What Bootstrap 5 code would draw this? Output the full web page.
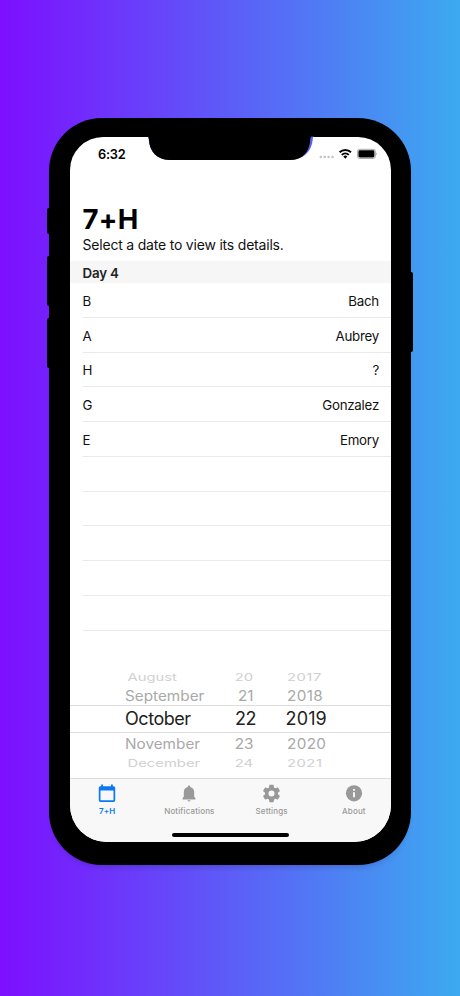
<!DOCTYPE html>
<html lang="en" data-bs-theme="light">
<head>
<meta charset="utf-8">
<meta name="viewport" content="width=device-width, initial-scale=1">
<title>7+H</title>
<link href="https://cdn.jsdelivr.net/npm/bootstrap@5.3.0/dist/css/bootstrap.min.css" rel="stylesheet">
<style>
body{width:460px;height:996px;background:linear-gradient(90deg,#7d0fff 0%,#3caaf0 100%);font-family:Inter,"Liberation Sans",sans-serif;color:#111;line-height:1}
.stage{padding:118px 0 0 49px}
.phone{width:361.5px;height:747px;padding:18.5px 19.5px 23px 20.5px;background:#000;border-radius:53px;box-shadow:0 5px 7px -5px rgba(20,20,70,.35)}
.side-key{background:#000;width:4px;border-radius:2px}
.key-mute{left:-2px;top:90px;height:26px}
.key-up{left:-2px;top:138px;height:50px}
.key-down{left:-2px;top:200px;height:50px}
.key-power{right:-2px;top:154px;height:80px}
.screen{background:#fff;border-radius:33px 33px 37px 37px}
.notch{left:98px;top:17px}
.status{height:68.5px;padding:10px 14px 0 28.5px}
.clock{font-size:12.8px;font-weight:600;color:#000;letter-spacing:-.2px;line-height:15px}
.headline{padding-left:13px;height:56px;padding-top:1px}
.headline h1{font-size:27.5px;font-weight:700;line-height:27px;color:#000;letter-spacing:.3px}
.headline p{font-size:14px;line-height:16px;letter-spacing:-.2px}
.day-head{height:22px;background:#f6f6f6;padding:2.5px 0 0 13px;font-size:13.3px;font-weight:600;color:#222;letter-spacing:-.15px}
.lines{padding-left:13px}
.line-row{height:34.76px;border-bottom:1px solid #e9e9e9;padding-right:12px;padding-top:3.5px;font-size:13.3px;letter-spacing:-.24px}
.picker{height:105px;margin-top:31.5px;padding-top:5px}
.wheel{grid-template-columns:101px 56px 86px;padding-left:55.5px;text-align:left}
.wheel>:nth-child(2){text-align:right;padding-right:26px}
.wheel>*{white-space:nowrap}
.wheel-far{height:18px;font-size:14.8px;color:#d0d0d0;padding-top:2px}
.wheel-far>:nth-child(1){padding-left:2.5px}
.wheel-far>:nth-child(2){padding-right:29px}
.wheel-far>:nth-child(3){padding-left:5px;letter-spacing:.5px}
.wheel-near{height:20px;font-size:15.3px;color:#a9a9a9;padding-top:1px}
.wheel-near>:nth-child(2){padding-right:28.5px}
.wheel-near>:nth-child(3){padding-left:5px;letter-spacing:.35px}
.wheel-now{height:28px;font-size:18px;color:#222;border-top:1px solid #ddd;border-bottom:1px solid #ddd;letter-spacing:-.45px}
.wheel-now>:nth-child(3){padding-left:3.5px;letter-spacing:.15px}
.squash{display:inline-block;transform:scaleY(.72)}
.press{display:inline-block;transform:scaleY(.92)}
.wheel-grid{display:grid;align-items:center}
.tabs{height:64px;background:#f8f8f8;border-top:1px solid #dcdcdc;padding-top:5px}
.tab-row{margin:0 -4px 0 -3.5px}
.tab{color:#999;font-size:8px;font-weight:500;letter-spacing:.13px;text-decoration:none;gap:4px}
.tab-on{color:#0a78f5}
.tab-on span{font-weight:600}
.home-bar{width:117px;height:4px;border-radius:2px;background:#000;margin:18px 0 0 102.5px}
</style>
<script src="https://cdn.jsdelivr.net/npm/bootstrap@5.3.0/dist/js/bootstrap.bundle.min.js"></script>
</head>
<body class="m-0 overflow-hidden">
<div class="stage">
<div class="phone position-relative">
  <span class="side-key key-mute position-absolute"></span>
  <span class="side-key key-up position-absolute"></span>
  <span class="side-key key-down position-absolute"></span>
  <span class="side-key key-power position-absolute"></span>
  <main class="screen h-100 d-flex flex-column overflow-hidden">
    <div class="status d-flex justify-content-between align-items-start flex-shrink-0">
      <span class="clock">6:32</span>
      <svg width="58" height="14" viewBox="0 0 58 14" aria-hidden="true">
        <g fill="#c4c4c4"><circle cx="1.8" cy="10" r="1.3"/><circle cx="5.7" cy="10" r="1.3"/><circle cx="9.6" cy="10" r="1.3"/><circle cx="13.5" cy="10" r="1.3"/></g>
        <g fill="none" stroke="#000" stroke-width="2"><path d="M20.6 5.3a8 8 0 0 1 11.4 0"/><path d="M22.8 7.9a5 5 0 0 1 7 0"/></g>
        <path d="M26.3 11.700l-2-2.100a2.800 2.800 0 0 1 4 0z"/>
        <rect x="38.4" y="2.3" width="18" height="9.2" rx="2.4" fill="#fff" stroke="#aaa"/>
        <rect x="39.4" y="3.3" width="16" height="7.2" rx="1.4"/>
        <path d="M57.3 5.4c1 .5 1 2.200 0 2.700z" fill="#aaa"/>
      </svg>
    </div>
    <header class="headline flex-shrink-0">
      <h1 class="m-0">7+H</h1>
      <p class="m-0 mt-1">Select a date to view its details.</p>
    </header>
    <div class="day-head d-flex align-items-center flex-shrink-0">Day 4</div>
    <section class="lines flex-shrink-0">
      <div class="line-row d-flex justify-content-between align-items-center"><span>B</span><span>Bach</span></div>
      <div class="line-row d-flex justify-content-between align-items-center"><span>A</span><span>Aubrey</span></div>
      <div class="line-row d-flex justify-content-between align-items-center"><span>H</span><span>?</span></div>
      <div class="line-row d-flex justify-content-between align-items-center"><span>G</span><span>Gonzalez</span></div>
      <div class="line-row d-flex justify-content-between align-items-center"><span>E</span><span>Emory</span></div>
      <div class="line-row"></div><div class="line-row"></div><div class="line-row"></div><div class="line-row"></div><div class="line-row"></div>
    </section>
    <section class="picker flex-shrink-0">
      <div class="wheel wheel-grid wheel-far"><span><span class="squash">August</span></span><span><span class="squash">20</span></span><span><span class="squash">2017</span></span></div>
      <div class="wheel wheel-grid wheel-near"><span class="press">September</span><span class="press">21</span><span class="press">2018</span></div>
      <div class="wheel wheel-grid wheel-now"><span>October</span><span>22</span><span>2019</span></div>
      <div class="wheel wheel-grid wheel-near"><span class="press">November</span><span class="press">23</span><span class="press">2020</span></div>
      <div class="wheel wheel-grid wheel-far"><span><span class="squash">December</span></span><span><span class="squash">24</span></span><span><span class="squash">2021</span></span></div>
    </section>
    <footer class="tabs mt-auto flex-shrink-0">
      <nav class="tab-row row g-0">
        <a class="tab tab-on col d-flex flex-column align-items-center"><svg width="18" height="19" viewBox="0 0 18 19" fill="currentColor"><path fill-rule="evenodd" d="M3.200 .5h1.800v1.800h8V.5h1.800v1.800h.7A1.700 1.700 0 0 1 17.200 4v12.200a1.700 1.700 0 0 1-1.700 1.700h-13a1.700 1.700 0 0 1-1.700-1.700V4a1.700 1.700 0 0 1 1.700-1.700h.7zM2.500 6.500v9.700h13V6.500z"/></svg><span>7+H</span></a>
        <a class="tab col d-flex flex-column align-items-center"><svg width="18" height="19" viewBox="0 0 18 19" fill="currentColor"><path d="M9 17.400a1.600 1.600 0 0 0 1.600-1.200H7.400A1.600 1.600 0 0 0 9 17.400zM14.200 12.700V8.300c0-2.700-1.500-4.600-4-5.200v-.5a1.200 1.200 0 0 0-2.400 0v.5C5.300 3.700 3.800 5.600 3.800 8.300v4.400l-1.200 1.400v1.300h12.800v-1.300z"/></svg><span>Notifications</span></a>
        <a class="tab col d-flex flex-column align-items-center"><svg width="19" height="19" viewBox="1 1 22 22" fill="currentColor"><path d="M19.430 12.980c.04-.32.07-.64.07-.98s-.03-.66-.07-.98l2.110-1.650c.19-.15.24-.42.12-.64l-2-3.460c-.12-.22-.39-.3-.61-.22l-2.490 1c-.52-.4-1.080-.73-1.690-.98l-.38-2.650A.49.49 0 0 0 14 2h-4c-.25 0-.46.18-.49.42l-.38 2.650c-.61.25-1.170.59-1.690.98l-2.490-1c-.23-.09-.49 0-.61.22l-2 3.460c-.13.22-.07.49.12.64l2.110 1.650c-.04.32-.07.65-.07.98s.03.66.07.98l-2.110 1.650c-.19.15-.24.42-.12.64l2 3.460c.12.22.39.3.61.22l2.490-1c.52.4 1.080.73 1.690.98l.38 2.650c.03.24.24.42.49.42h4c.25 0 .46-.18.49-.42l.38-2.650c.61-.25 1.170-.59 1.690-.98l2.490 1c.23.09.49 0 .61-.22l2-3.460c.12-.22.07-.49-.12-.64zM12 15.500a3.500 3.500 0 1 1 0-7 3.500 3.500 0 0 1 0 7z"/></svg><span>Settings</span></a>
        <a class="tab col d-flex flex-column align-items-center"><svg width="18" height="19" viewBox="0 0 18 19"><circle cx="9" cy="9.300" r="8.100" fill="currentColor"/><path d="M8.100 5h1.800v1.700H8.100zM8.100 8.300h1.800v5H8.100z" fill="#fff"/></svg><span>About</span></a>
      </nav>
      <div class="home-bar"></div>
    </footer>
  </main>
  <svg class="notch position-absolute" width="168" height="26" viewBox="0 0 168 26" aria-hidden="true">
    <path d="M.5 1c.8.3 1.200 1 1.200 3 .5 12 8 20.500 20 20.500H144C157 24.500 165 16 165.800 4c0-2 .7-2.700 1.500-3z" fill="#5a60ee"/>
    <path d="M0 0h167v1.500h-2c-1.200.4-1.700 1-1.700 3C162.500 17 155.500 25 143.500 25h-121C10.500 25 2.500 17 1.900 4.500 1.900 2.500 1.300 1.900 0 1.500z"/>
  </svg>
</div>
</div>
</body>
</html>
